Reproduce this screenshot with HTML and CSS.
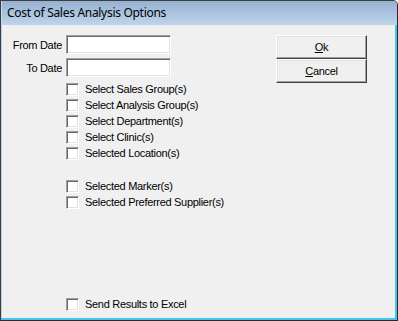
FILE: index.html
```html
<!DOCTYPE html>
<html>
<head>
<meta charset="utf-8">
<link rel="stylesheet" href="styles.css">
</head>
<body>
<div class="window">
  <div class="titlebar">Cost of Sales Analysis Options</div>
  <div class="client">
    <div class="left">
      <div class="fields">
        <label class="flabel">From Date</label><div class="textbox"></div>
        <label class="flabel">To Date</label><div class="textbox"></div>
      </div>
      <div class="checks">
        <div class="check"><span class="box"></span><span>Select Sales Group(s)</span></div>
        <div class="check"><span class="box"></span><span>Select Analysis Group(s)</span></div>
        <div class="check"><span class="box"></span><span>Select Department(s)</span></div>
        <div class="check"><span class="box"></span><span>Select Clinic(s)</span></div>
        <div class="check"><span class="box"></span><span>Selected Location(s)</span></div>
      </div>
      <div class="checks second">
        <div class="check"><span class="box"></span><span>Selected Marker(s)</span></div>
        <div class="check"><span class="box"></span><span>Selected Preferred Supplier(s)</span></div>
      </div>
      <div class="checks bottom">
        <div class="check"><span class="box"></span><span>Send Results to Excel</span></div>
      </div>
    </div>
    <div class="buttons">
      <button class="btn"><u>O</u>k</button>
      <button class="btn"><u>C</u>ancel</button>
    </div>
  </div>
</div>
</body>
</html>
```
FILE: styles.css
```css
html, body {
  margin: 0;
  padding: 0;
  background: #ffffff;
}
.window {
  width: 398px;
  height: 321px;
  box-sizing: border-box;
  border-top: 1px solid #3d3d3d;
  border-left: 1px solid #3d3d3d;
  border-right: 1px solid #2a2a2a;
  border-bottom: 1px solid #2a2a2a;
  border-top-right-radius: 5px;
  display: flex;
  flex-direction: column;
  background: #f0f0f0;
  box-shadow: inset -2px -2px 0 #3cc6f0;
  overflow: hidden;
}
.titlebar {
  height: 24px;
  flex: none;
  background: linear-gradient(to bottom, #96b2d0, #bed4ec);
  font-family: "Noto Sans", "DejaVu Sans", sans-serif;
  font-size: 12px;
  letter-spacing: -0.3px;
  color: #000;
  line-height: 24px;
  padding-left: 6px;
  box-shadow: inset 1px 0 0 #c8daee;
}
.client {
  flex: 1;
  display: flex;
  justify-content: space-between;
  padding: 10px 28px 6px 0;
  font-family: "Liberation Sans", Arial, sans-serif;
  font-size: 11px;
  letter-spacing: -0.3px;
  color: #000;
  border-left: 1px solid #bcd0e8;
  margin-right: 2px;
  margin-bottom: 2px;
}
.left {
  display: flex;
  flex-direction: column;
}
.fields {
  display: grid;
  grid-template-columns: 60px 105px;
  column-gap: 4px;
  row-gap: 4px;
  align-items: center;
}
.flabel {
  text-align: right;
}
.textbox {
  height: 19px;
  box-sizing: border-box;
  background: #fff;
  border-style: solid;
  border-width: 1px;
  border-color: #a0a0a0 #fff #fff #a0a0a0;
  box-shadow: inset 1px 1px 0 #696969, inset -1px -1px 0 #e3e3e3;
}
.checks {
  margin-left: 64px;
  margin-top: 4px;
  display: flex;
  flex-direction: column;
}
.checks.second {
  margin-top: 17px;
}
.checks.bottom {
  margin-top: auto;
}
.check {
  height: 16px;
  display: flex;
  align-items: center;
  gap: 6px;
  white-space: nowrap;
}
.box {
  width: 13px;
  height: 13px;
  box-sizing: border-box;
  background: #fff;
  border-style: solid;
  border-width: 1px;
  border-color: #a0a0a0 #fff #fff #a0a0a0;
  box-shadow: inset 1px 1px 0 #696969, inset -1px -1px 0 #e3e3e3;
}
.buttons {
  display: flex;
  flex-direction: column;
}
.btn {
  width: 91px;
  height: 24px;
  margin: 0;
  padding: 0;
  box-sizing: border-box;
  background: #f0f0f0;
  border-style: solid;
  border-width: 1px;
  border-color: #fff #404040 #404040 #fff;
  box-shadow: inset -1px -1px 0 #a0a0a0, inset 1px 1px 0 #e3e3e3;
  font-family: "Liberation Sans", Arial, sans-serif;
  font-size: 11px;
  letter-spacing: -0.3px;
  color: #000;
}
```
